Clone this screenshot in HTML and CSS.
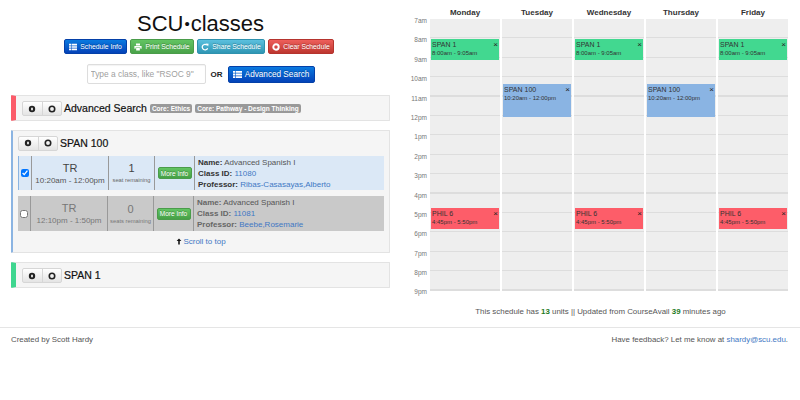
FILE: index.html
```html
<!DOCTYPE html>
<html>
<head>
<meta charset="utf-8">
<title>SCU classes</title>
<link rel="stylesheet" href="styles.css">
</head>
<body>
<svg class="defs" width="0" height="0">
  <symbol id="i-list" viewBox="0 0 10 10"><path fill="currentColor" d="M0 1h2.5v2H0zM3.2 1H10v2H3.2zM0 4h2.5v2H0zM3.2 4H10v2H3.2zM0 7h2.5v2H0zM3.2 7H10v2H3.2z"/></symbol>
  <symbol id="i-print" viewBox="0 0 10 10"><path fill="currentColor" d="M2.5 .5h5v2.5h-5zM.5 3.6h9v3.6H8V5.6H2v1.6H.5zM2.7 6.3h4.6v3.2H2.7z"/></symbol>
  <symbol id="i-share" viewBox="0 0 10 10"><path fill="none" stroke="currentColor" stroke-width="1.6" d="M8.3 6.5A3.5 3.5 0 1 1 7.5 2.6"/><path fill="currentColor" d="M6 .5l3.5.3-.6 3.5z"/></symbol>
  <symbol id="i-clear" viewBox="0 0 10 10"><circle cx="5" cy="5" r="3.4" fill="none" stroke="currentColor" stroke-width="2.4"/></symbol>
  <symbol id="i-dot" viewBox="0 0 10 10"><circle cx="5" cy="5" r="3.4" fill="none" stroke="currentColor" stroke-width="2"/></symbol>
  <symbol id="i-dot-fill" viewBox="0 0 10 10"><circle cx="5" cy="5" r="4" fill="currentColor"/><rect x="3.8" y="3.4" width="2.4" height="3.2" fill="#ddd"/></symbol>
  <symbol id="i-up" viewBox="0 0 10 10"><path fill="currentColor" d="M5 0l4 4.2H6.3V10H3.7V4.2H1z"/></symbol>
</svg>
<main class="page">
  <section class="left">
    <h1 class="title">SCU<span class="dot">•</span>classes</h1>
    <div class="actions">
      <a class="btn small blue"><svg class="ico"><use href="#i-list"/></svg>Schedule Info</a>
      <a class="btn small green"><svg class="ico"><use href="#i-print"/></svg>Print Schedule</a>
      <a class="btn small cyan"><svg class="ico"><use href="#i-share"/></svg>Share Schedule</a>
      <a class="btn small red"><svg class="ico"><use href="#i-clear"/></svg>Clear Schedule</a>
    </div>
    <div class="search">
      <input class="search-input" type="text" placeholder="Type a class, like &quot;RSOC 9&quot;">
      <b class="or">OR</b>
      <a class="btn large blue"><svg class="ico"><use href="#i-list"/></svg>Advanced Search</a>
    </div>

    <div class="panel bar-red">
      <div class="panel-head">
        <div class="toggle"><span><svg class="tg"><use href="#i-dot-fill"/></svg></span><span><svg class="tg"><use href="#i-dot"/></svg></span></div>
        <b class="panel-title">Advanced Search</b>
        <span class="tag">Core: Ethics</span>
        <span class="tag">Core: Pathway - Design Thinking</span>
      </div>
    </div>

    <div class="panel bar-blue open">
      <div class="panel-head">
        <div class="toggle"><span><svg class="tg"><use href="#i-dot-fill"/></svg></span><span><svg class="tg"><use href="#i-dot"/></svg></span></div>
        <b class="panel-title">SPAN 100</b>
      </div>
      <div class="section selected">
        <div class="c-check"><input type="checkbox" checked></div>
        <div class="c-time"><div class="big">TR</div><div class="sub">10:20am - 12:00pm</div></div>
        <div class="c-seats"><div class="big">1</div><div class="tiny">seat remaining</div></div>
        <div class="c-more"><a class="btn more">More Info</a></div>
        <div class="c-info">
          <div><b>Name:</b> Advanced Spanish I</div>
          <div><b>Class ID:</b> <a>11080</a></div>
          <div><b>Professor:</b> <a>Ribas-Casasayas,Alberto</a></div>
        </div>
      </div>
      <div class="section full">
        <div class="c-check"><input type="checkbox"></div>
        <div class="c-time"><div class="big">TR</div><div class="sub">12:10pm - 1:50pm</div></div>
        <div class="c-seats"><div class="big">0</div><div class="tiny">seats remaining</div></div>
        <div class="c-more"><a class="btn more">More Info</a></div>
        <div class="c-info">
          <div><b>Name:</b> Advanced Spanish I</div>
          <div><b>Class ID:</b> <a>11081</a></div>
          <div><b>Professor:</b> <a>Beebe,Rosemarie</a></div>
        </div>
      </div>
      <div class="scroll-top"><svg class="up"><use href="#i-up"/></svg><a>Scroll to top</a></div>
    </div>

    <div class="panel bar-green">
      <div class="panel-head">
        <div class="toggle"><span><svg class="tg"><use href="#i-dot-fill"/></svg></span><span><svg class="tg"><use href="#i-dot"/></svg></span></div>
        <b class="panel-title">SPAN 1</b>
      </div>
    </div>
  </section>

  <section class="right">
    <div class="cal">
      <div class="cal-head">
        <div>Monday</div><div>Tuesday</div><div>Wednesday</div><div>Thursday</div><div>Friday</div>
      </div>
      <div class="cal-body">
        <div class="hours">
          <span>7am</span><span>8am</span><span>9am</span><span>10am</span><span>11am</span><span>12pm</span><span>1pm</span><span>2pm</span><span>3pm</span><span>4pm</span><span>5pm</span><span>6pm</span><span>7pm</span><span>8pm</span><span>9pm</span>
        </div>
        <div class="day">
          <div class="ev ev-green" style="top:20px;height:21px"><b>SPAN 1</b><i>×</i><small>8:00am - 9:05am</small></div>
          <div class="ev ev-red" style="top:189px;height:21px"><b>PHIL 6</b><i>×</i><small>4:45pm - 5:50pm</small></div>
        </div>
        <div class="day">
          <div class="ev ev-blue" style="top:65px;height:33px"><b>SPAN 100</b><i>×</i><small>10:20am - 12:00pm</small></div>
        </div>
        <div class="day">
          <div class="ev ev-green" style="top:20px;height:21px"><b>SPAN 1</b><i>×</i><small>8:00am - 9:05am</small></div>
          <div class="ev ev-red" style="top:189px;height:21px"><b>PHIL 6</b><i>×</i><small>4:45pm - 5:50pm</small></div>
        </div>
        <div class="day">
          <div class="ev ev-blue" style="top:65px;height:33px"><b>SPAN 100</b><i>×</i><small>10:20am - 12:00pm</small></div>
        </div>
        <div class="day">
          <div class="ev ev-green" style="top:20px;height:21px"><b>SPAN 1</b><i>×</i><small>8:00am - 9:05am</small></div>
          <div class="ev ev-red" style="top:189px;height:21px"><b>PHIL 6</b><i>×</i><small>4:45pm - 5:50pm</small></div>
        </div>
      </div>
    </div>
    <p class="summary">This schedule has <b>13</b> units || Updated from CourseAvail <b>39</b> minutes ago</p>
  </section>
</main>
<footer class="footer">
  <span>Created by Scott Hardy</span>
  <span>Have feedback? Let me know at <a>shardy@scu.edu</a>.</span>
</footer>
</body>
</html>
```
FILE: styles.css
```css
* { box-sizing: border-box; }
html, body { margin: 0; padding: 0; background: #fff; }
body { font-family: "Liberation Sans", Arial, sans-serif; font-size: 9px; line-height: 11px; color: #333; overflow: hidden; }
a { color: #3f78c4; text-decoration: none; }
.defs { position: absolute; }

.page { display: flex; height: 327px; padding: 0 10px 0 11px; }
.left { width: 379px; flex: none; }
.right { flex: 1; margin-left: 10px; }

.title { margin: 0; padding-top: 11px; height: 39px; font-size: 22px; line-height: 26px; font-weight: 400; text-align: center; color: #111; }
.dot { font-size: 15px; margin: 0 1px; vertical-align: 2px; line-height: 0; }

.btn { display: inline-flex; align-items: center; justify-content: center; color: #fff; border-radius: 2px; white-space: nowrap; text-shadow: 0 -1px 0 rgba(0,0,0,.25); }
.small { height: 15px; font-size: 6.8px; }
.large { height: 17px; font-size: 8.2px; }
.ico { width: 8px; height: 8px; margin-right: 3px; flex: none; }
.large .ico { width: 9px; height: 9px; }
.blue { background: linear-gradient(#0a7ae0, #0442b8); border: 1px solid #0440a8; }
.green { background: linear-gradient(#62c462, #4aa24a); border: 1px solid #4a9c4a; }
.cyan { background: linear-gradient(#5bc0de, #2f96b4); border: 1px solid #2f92ae; }
.red { background: linear-gradient(#ee5f5b, #bd362f); border: 1px solid #b5342e; }

.actions { display: flex; justify-content: center; gap: 3px; margin-left: -3px; }
.actions .btn:nth-child(1) { width: 63px; }
.actions .btn:nth-child(2) { width: 64px; }
.actions .btn:nth-child(3) { width: 68px; }
.actions .btn:nth-child(4) { width: 66px; }

.search { display: flex; align-items: center; justify-content: center; margin-top: 10px; height: 20px; }
.search-input { width: 119px; height: 20px; border: 1px solid #ddd; border-radius: 2px; padding: 0 3px; font: 8.4px "Liberation Sans", Arial, sans-serif; color: #555; background: #fff; box-shadow: inset 0 1px 1px rgba(0,0,0,.05); }
.search-input::placeholder { color: #a0a0a0; }
.or { margin: 0 5px; font-size: 8px; color: #222; }
.large { width: 87px; }

.panel { margin-top: 9px; background: #f5f5f5; border: 1px solid #e3e3e3; border-radius: 1px; }
.search + .panel { margin-top: 11px; }
.bar-red { border-left: 5px solid #fb5c6a; height: 26px; }
.bar-green { border-left: 5px solid #3ed68f; height: 26px; }
.bar-blue { border-left: 2px solid #8bb4e2; height: 123px; padding-left: 5px; padding-right: 5px; }
.panel-head { display: flex; align-items: center; height: 25px; padding-left: 6px; }
.open .panel-head { padding-left: 0; height: 24px; }
.toggle { display: flex; width: 40px; height: 15px; flex: none; border: 1px solid #d6d6d6; border-radius: 2px; background: linear-gradient(#fff, #e4e4e4); margin-right: 2px; }
.toggle span { flex: 1; display: flex; align-items: center; justify-content: center; color: #222; }
.toggle span + span { border-left: 1px solid #d6d6d6; }
.tg { width: 8px; height: 8px; }
.panel-title { font-size: 10.5px; font-weight: 400; color: #111; margin-right: 3px; -webkit-text-stroke: .2px #111; }
.tag { background: #999; color: #fff; font-size: 6.5px; font-weight: 700; line-height: 9px; padding: 0 2px; border-radius: 2px; margin-right: 3px; }

.section { display: flex; height: 34px; margin-top: 1px; font-size: 9px; }
.section > div { display: flex; flex-direction: column; justify-content: center; border-right: 1px solid #999; flex: none; }
.selected { background: #dbe8f6; border-left: 1px solid #8bb4e2; }
.full { background: #c9c9c9; margin-top: 6px; height: 35px; color: #6f6f6f; }
.full .c-info, .full .big, .full .sub, .full .tiny { color: #777; }
.c-check { width: 13px; align-items: center; }
.c-check input { margin: 0; width: 8px; height: 8px; }
.c-time { width: 77px; text-align: center; }
.big { font-size: 11px; line-height: 14px; color: #444; }
.sub { font-size: 8px; line-height: 11px; color: #555; }
.c-seats { width: 46px; text-align: center; }
.tiny { font-size: 5.8px; line-height: 10px; color: #666; }
.c-more { width: 40px; align-items: center; }
.more { width: 34px; height: 12px; font-size: 6.5px; background: linear-gradient(#62c462, #46a046); border: 1px solid #4a9c4a; }
.section > .c-info { flex: 1; border-right: 0; padding-left: 3px; font-size: 8px; line-height: 11px; color: #555; }
.c-info b { color: #333; }
.full .c-info b { color: #666; }

.scroll-top { display: flex; justify-content: center; align-items: center; font-size: 8px; line-height: 11px; margin-top: 5px; }
.up { width: 6px; height: 7px; margin-right: 1px; color: #111; }

.cal { padding-top: 6px; }
.cal-head { display: flex; padding-left: 30px; height: 13px; }
.cal-head div { width: 72px; padding-right: 2px; text-align: center; font-size: 8px; line-height: 13px; font-weight: 700; color: #333; }
.cal-body { display: flex; height: 272px; }
.hours { width: 30px; flex: none; display: flex; flex-direction: column; font-size: 6.5px; color: #777; }
.hours span { flex: none; height: 19.4px; line-height: 3px; text-align: right; padding-right: 3px; }
.day { position: relative; width: 70px; height: 272px; margin-right: 2px; flex: none; background: repeating-linear-gradient(#eee 0, #eee 18.2px, #ddd 18.2px, #ddd 19.4px); }
.ev { position: absolute; left: 1px; right: 1px; padding: 1px 0 1px 1px; color: #333; font-size: 7px; line-height: 9px; overflow: hidden; }
.ev b { font-weight: 400; display: block; }
.ev i { position: absolute; right: 1px; top: 1px; font-size: 8px; font-style: normal; color: #222; }
.ev small { display: block; font-size: 6px; line-height: 9px; }
.ev-green { background: #42d890; }
.ev-blue { background: #8ab4e3; }
.ev-red { background: #fd5d69; }

.summary { margin: 0; padding: 15px 0 0 11px; text-align: center; color: #555; font-size: 7.9px; line-height: 11px; }
.summary b { color: #1e7a1e; }

.footer { display: flex; justify-content: space-between; border-top: 1px solid #e5e5e5; padding: 6px 12px 0 11px; font-size: 7.9px; line-height: 11px; color: #555; }
```
